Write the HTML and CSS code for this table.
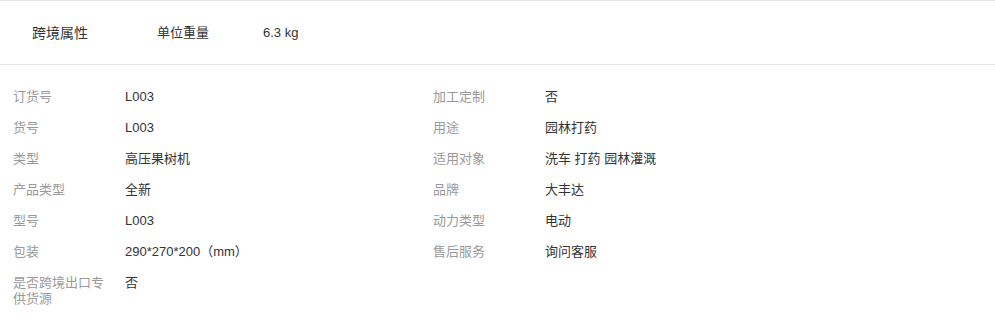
FILE: index.html
```html
<!DOCTYPE html>
<html lang="zh-CN">
<head>
<meta charset="utf-8">
<link rel="stylesheet" href="styles.css">
</head>
<body>
<section class="cross">
  <div class="cross-title">跨境属性</div>
  <div class="cross-item">
    <span class="cross-label">单位重量</span>
    <span class="cross-value">6.3 kg</span>
  </div>
</section>
<section class="attrs">
  <div class="col">
    <div class="row"><div class="label">订货号</div><div class="value">L003</div></div>
    <div class="row"><div class="label">货号</div><div class="value">L003</div></div>
    <div class="row"><div class="label">类型</div><div class="value">高压果树机</div></div>
    <div class="row"><div class="label">产品类型</div><div class="value">全新</div></div>
    <div class="row"><div class="label">型号</div><div class="value">L003</div></div>
    <div class="row"><div class="label">包装</div><div class="value">290*270*200（mm）</div></div>
    <div class="row"><div class="label">是否跨境出口专供货源</div><div class="value">否</div></div>
  </div>
  <div class="col">
    <div class="row"><div class="label">加工定制</div><div class="value">否</div></div>
    <div class="row"><div class="label">用途</div><div class="value">园林打药</div></div>
    <div class="row"><div class="label">适用对象</div><div class="value">洗车 打药 园林灌溉</div></div>
    <div class="row"><div class="label">品牌</div><div class="value">大丰达</div></div>
    <div class="row"><div class="label">动力类型</div><div class="value">电动</div></div>
    <div class="row"><div class="label">售后服务</div><div class="value">询问客服</div></div>
  </div>
</section>
</body>
</html>
```
FILE: styles.css
```css
html, body {
  margin: 0;
  padding: 0;
  background: #fff;
}
body {
  font-family: "Liberation Sans", Arial, "Noto Sans CJK SC", sans-serif;
  color: #333;
}
.cross {
  display: flex;
  align-items: center;
  height: 63px;
  border-top: 1px solid #e5e5e5;
  border-bottom: 1px solid #e5e5e5;
  padding-left: 32px;
  line-height: 20px;
}
.cross-title {
  width: 125px;
  font-size: 14px;
  color: #333;
}
.cross-item {
  display: flex;
  align-items: baseline;
  font-size: 13px;
}
.cross-label {
  width: 106px;
  color: #333;
}
.cross-value {
  color: #333;
}
.attrs {
  display: flex;
  padding: 16px 0 0 13px;
}
.col {
  width: 420px;
}
.row {
  display: flex;
  padding: 8px 0 7px;
  font-size: 13px;
  line-height: 16px;
  height: 16px;
  box-sizing: content-box;
}
.row:last-child {
  height: auto;
}
.row + .row {
  margin-top: 0;
}
.label {
  width: 100px;
  margin-right: 12px;
  color: #999;
}
.value {
  color: #333;
}
```
